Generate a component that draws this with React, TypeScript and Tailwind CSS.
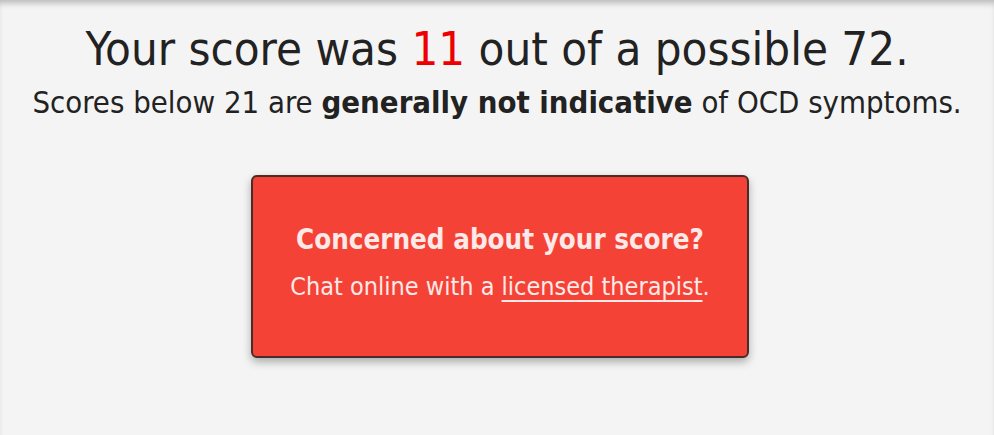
export default function App() {
  return (
    <div
      className="min-h-[435px] bg-[#f4f4f4] shadow-[inset_0_6px_6px_-3px_rgba(0,0,0,0.25)] flex flex-col items-center text-[#222]"
      style={{ fontFamily: '"DejaVu Sans Condensed", "DejaVu Sans", sans-serif' }}
    >
      <h1 className="mt-[18px] text-[47px] leading-[62px] text-center">
        Your score was <span className="text-[#e00]">11</span> out of a possible 72.
      </h1>
      <p className="mt-[2px] text-[30.8px] leading-[40px] text-center">
        Scores below 21 are <b>generally not indicative</b> of OCD symptoms.
      </p>
      <div className="mt-[53px] ml-[6px] w-[498px] h-[183px] rounded-[6px] border-2 border-[#4a2b27] bg-[#f44336] shadow-[0_4px_8px_rgba(0,0,0,0.3)] flex flex-col items-center pt-[44px] text-[#fde9e7]">
        <h2 className="text-[27.5px] font-bold leading-[36px]">Concerned about your score?</h2>
        <p className="mt-[15px] text-[25px] leading-[30px]">
          Chat online with a{' '}
          <a href="#" className="underline decoration-2 underline-offset-[5px]">
            licensed therapist
          </a>
          .
        </p>
      </div>
    </div>
  );
}
